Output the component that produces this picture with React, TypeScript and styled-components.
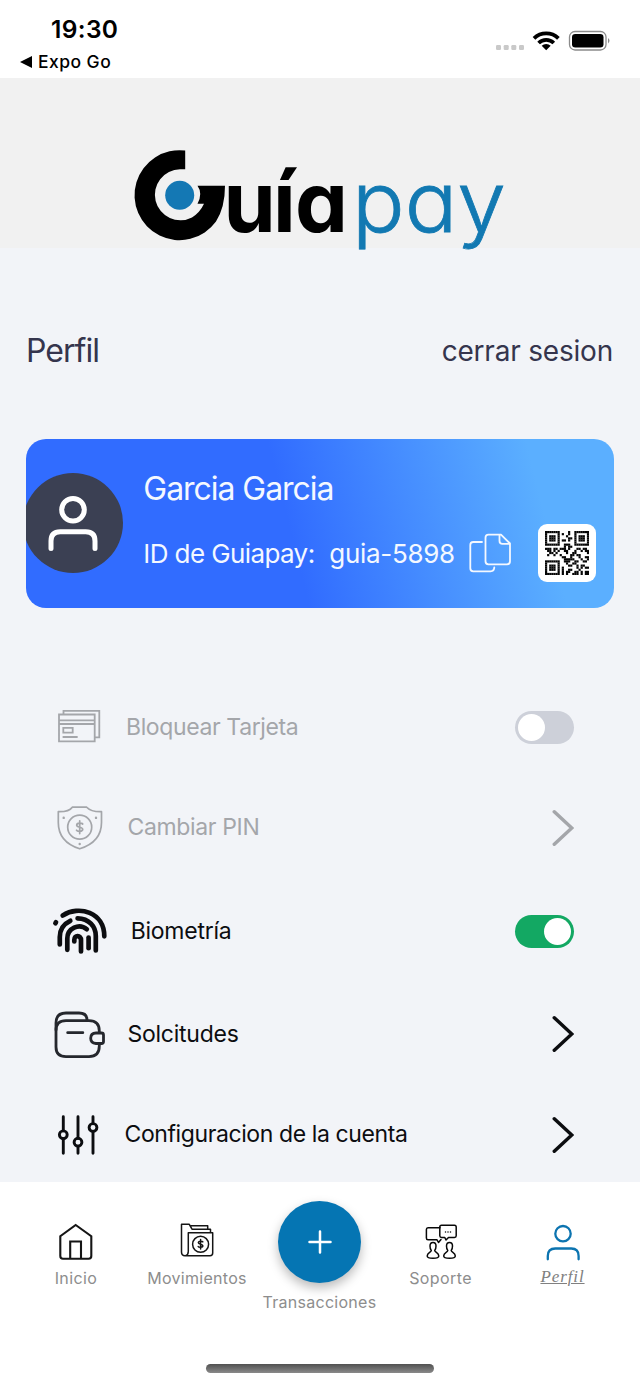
import React from "react";
import styled, { createGlobalStyle } from "styled-components";

const GlobalStyle = createGlobalStyle`
  * { box-sizing: border-box; }
  body { margin: 0; background: #f2f4f8; }
`;

const Screen = styled.main`
  width: 640px;
  height: 1386px;
  display: flex;
  flex-direction: column;
  overflow: hidden;
  background: #f2f4f8;
  font-family: Inter, "Liberation Sans", sans-serif;
  color: #111216;
`;

const Label = styled.span<{ $size: number; $track?: number; $weight?: number; $color?: string }>`
  font-size: ${(p) => p.$size}px;
  font-weight: ${(p) => p.$weight ?? 400};
  letter-spacing: ${(p) => p.$track ?? 0}px;
  color: ${(p) => p.$color ?? "inherit"};
  line-height: 1.2;
  white-space: nowrap;
`;

const StatusBar = styled.header`
  height: 78px;
  flex: none;
  display: flex;
  justify-content: space-between;
  background: #fff;
  color: #000;
`;

const StatusLeft = styled.div`
  display: flex;
  flex-direction: column;
  padding: 15px 0 0 20px;
  gap: 7px;
`;

const Clock = styled(Label)`
  padding-left: 31px;
`;

const BackLink = styled.div`
  display: flex;
  align-items: center;
  gap: 6px;
`;

const StatusIcons = styled.svg`
  display: block;
  margin: 24px 26px 0 0;
`;

const Brand = styled.section`
  height: 169.5px;
  flex: none;
  background: #f1f1f1;
  display: flex;
  align-items: flex-end;
  justify-content: center;
`;

const Logo = styled.svg`
  display: block;
  overflow: visible;
  font-family: Inter, sans-serif;
  font-feature-settings: "cv11";
`;

const TitleRow = styled.div`
  display: flex;
  justify-content: space-between;
  align-items: center;
  height: 48px;
  margin: 80px 27px 0 26px;
  flex: none;
  color: #35354d;
`;

const Card = styled.section`
  flex: none;
  display: flex;
  width: 588px;
  height: 169px;
  margin: 63px 0 0 25.5px;
  border-radius: 20px;
  overflow: hidden;
  color: #f4f8ff;
  background: linear-gradient(76deg, #316cff 45%, #5bafff 86%);
`;

const Avatar = styled.svg`
  flex: none;
  margin: 34px 0 0 -2.7px;
`;

const CardInfo = styled.div`
  width: 415px;
  flex: none;
  padding: 31px 0 0 20.5px;
`;

const IdLine = styled.div`
  display: flex;
  align-items: center;
  height: 44px;
  margin-top: 23.5px;
`;

const IdKey = styled(Label)`
  width: 186px;
`;

const IdValue = styled(Label)`
  width: 140px;
`;

const QrTile = styled.div`
  width: 58px;
  height: 58px;
  margin-top: 85px;
  display: grid;
  place-items: center;
  border-radius: 9px;
  background: #fff;
`;

const Settings = styled.section`
  flex: 1;
  min-height: 0;
  overflow: hidden;
  padding-top: 69.5px;
`;

const Row = styled.div<{ $h: number; $muted?: boolean }>`
  display: flex;
  align-items: center;
  height: ${(p) => p.$h}px;
  padding: 0 66px 0 40px;
  color: ${(p) => (p.$muted ? "#a4a6aa" : "#0c0d10")};
`;

const RowLabel = styled(Label)`
  flex: 1;
  padding-top: 1.5px;
`;

const Toggle = styled.div<{ $on?: boolean }>`
  width: 59px;
  height: 33px;
  padding: 3px;
  border-radius: 17px;
  display: flex;
  justify-content: ${(p) => (p.$on ? "flex-end" : "flex-start")};
  background: ${(p) => (p.$on ? "#13a863" : "#cdd0d9")};
`;

const Knob = styled.div`
  width: 27px;
  height: 27px;
  border-radius: 50%;
  background: #fff;
`;

const TabBar = styled.nav`
  flex: none;
  height: 204px;
  display: flex;
  flex-direction: column;
  align-items: center;
  background: #fff;
`;

const Tabs = styled.div`
  width: 100%;
  height: 182px;
  display: grid;
  grid-template-columns: 121px 121px 124px 118px 126px;
  padding-left: 15.5px;
`;

const Tab = styled.div`
  display: flex;
  flex-direction: column;
  align-items: center;
  padding-top: 34px;
  gap: 3px;
  color: #8d8d8d;
`;

const CenterTab = styled(Tab)`
  padding-top: 18.5px;
  gap: 10px;
`;

const AddButton = styled.div`
  width: 83px;
  height: 82px;
  border-radius: 50%;
  display: grid;
  place-items: center;
  background: #0575b3;
  box-shadow: 0 5px 11px rgba(0, 0, 0, 0.27);
`;

const ActiveLabel = styled.span`
  font: italic 17px "Liberation Serif", serif;
  line-height: 16px;
  letter-spacing: 0.9px;
  text-decoration: underline;
  text-decoration-thickness: 1px;
  color: #808080;
`;

const HomeIndicator = styled.div`
  width: 228px;
  height: 8.5px;
  border-radius: 5px;
  background: linear-gradient(#505050, #8a8a8a);
`;

type IconProps = { x: number; y: number; w: number; h: number; stroke?: string; sw?: number; children: React.ReactNode };

const IconSvg = styled.svg`
  flex: none;
  display: block;
`;

const Icon = ({ x, y, w, h, stroke = "currentColor", sw = 2, children }: IconProps) => (
  <IconSvg width={w} height={h} viewBox={`${x} ${y} ${w} ${h}`} fill="none" stroke={stroke} strokeWidth={sw} strokeLinecap="round" strokeLinejoin="round">
    {children}
  </IconSvg>
);

const Chevron = () => (
  <Icon x={550} y={807} w={24} h={40} sw={3.5}>
    <path d="M554.3 810.8 571.8 827 554.3 843.2" strokeLinejoin="miter" />
  </Icon>
);

const DOLLAR = "M3 -3.2C2.4 -4.4 -3 -4.8 -3 -2C-3 0.4 3 -0.4 3 2C3 4.8 -2.6 4.4 -3.2 3M0 -6.4V6.4";

const QR_ROWS = [
  "111111100001001111111",
  "100000101001001000001",
  "101110100010001011101",
  "101110100001101011101",
  "101110101101001011101",
  "100000100000001000001",
  "111111100111001111111",
  "000000000101100000000",
  "111011011101000110110",
  "011010100110001001011",
  "001101000010011000001",
  "010010010000110110000",
  "000000001100100010011",
  "000000000111110001001",
  "111111100111001100110",
  "100000100010011000000",
  "101110100001100101100",
  "101110101000000101011",
  "101110101001100010000",
  "100000101011001101011",
  "111111101010011101011",
];

const QrCode = () => (
  <svg width="44" height="44" viewBox="0 0 21 21" fill="#050505">
    {QR_ROWS.flatMap((row, y) =>
      [...row].map((c, x) => (c === "1" ? <rect key={`${x}-${y}`} x={x} y={y} width="1.04" height="1.04" /> : null))
    )}
  </svg>
);

export default function App() {
  return (
    <Screen>
      <GlobalStyle />
      <StatusBar>
        <StatusLeft>
          <Clock $size={24.5} $weight={600} $track={0.35}>19:30</Clock>
          <BackLink>
            <svg width="12" height="12" viewBox="0 0 12 12"><path d="M0 6 12 0V12Z" /></svg>
            <Label $size={17.5} $weight={500} $track={0.45}>Expo Go</Label>
          </BackLink>
        </StatusLeft>
        <StatusIcons width="120" height="32" viewBox="494 24 120 32">
          <g fill="#c9c9c9">
            <rect x="496" y="45" width="5" height="5" rx="1.2" />
            <rect x="503.7" y="45" width="5" height="5" rx="1.2" />
            <rect x="511.3" y="45" width="5" height="5" rx="1.2" />
            <rect x="519" y="45" width="5" height="5" rx="1.2" />
          </g>
          <g fill="none" stroke="#000" strokeWidth="3.8">
            <path d="M534 38.3A17.5 17.5 0 0 1 558.4 38.3" />
            <path d="M538.6 43A11 11 0 0 1 553.8 43" />
          </g>
          <path d="M546.2 50.3 541.7 45.7A6.5 6.5 0 0 1 550.7 45.7Z" />
          <rect x="569.5" y="31.5" width="36.5" height="18.5" rx="5.5" fill="none" stroke="#8b8b8b" strokeWidth="1.3" />
          <rect x="572" y="34" width="31.5" height="13.5" rx="3.3" />
          <path d="M608 38Q611 40.7 608 43.5Z" fill="#8b8b8b" />
        </StatusIcons>
      </StatusBar>

      <Brand>
        <Logo width="380" height="98" viewBox="130 149.500 380 98">
          <path d="M185.200 150V168.800H180A25.500 25.500 0 1 0 192 217Q200 212 204 203.300H197.500Q203 193 197.500 185.300H225Q225 207 216 221A45 45 0 1 1 185.200 150Z" />
          <circle cx="179.700" cy="194.700" r="14.500" fill="#1478b4" />
          <text x="223.500 273 295" y="231" fontSize="84" fontWeight="700">uía</text>
          <text x="352" y="231" fontSize="84" fontWeight="300" fill="#1279b2" stroke="#1279b2" strokeWidth="0.8" textLength="154" lengthAdjust="spacingAndGlyphs">pay</text>
        </Logo>
      </Brand>

      <TitleRow>
        <Label $size={32} $track={-0.95}>Perfil</Label>
        <Label $size={28} $track={-0.2}>cerrar sesion</Label>
      </TitleRow>

      <Card>
        <Avatar width="100" height="100" viewBox="23.300 473 100 100">
          <circle cx="73.300" cy="523" r="50" fill="#3b4053" />
          <g fill="none" stroke="#fff" strokeWidth="5" strokeLinecap="round">
            <circle cx="73.300" cy="509.700" r="11.300" />
            <path d="M51.300 548.500V541Q51.300 531.700 60.500 531.700H86Q95.300 531.700 95.300 541V548.500" />
          </g>
        </Avatar>
        <CardInfo>
          <Label $size={32} $track={-1.05}>Garcia Garcia</Label>
          <IdLine>
            <IdKey $size={26} $track={-0.6}>ID de Guiapay:</IdKey>
            <IdValue $size={26} $track={-0.3}>guia-5898</IdValue>
            <Icon x={470} y={532} w={43} h={42} sw={1.8}>
              <path d="M502 534.700H489.500Q486.500 534.700 486.500 537.700V561.300Q486.500 564.300 489.500 564.300H508Q511 564.300 511 561.300V543.500L502 534.700ZM500.500 534.700V541Q500.500 543.900 503.500 543.900H511" />
              <path d="M483 542H474.300Q471.300 542 471.300 545V568.300Q471.300 571.300 474.300 571.300H491.500Q495.300 571.300 495.300 567.300" />
            </Icon>
          </IdLine>
        </CardInfo>
        <QrTile><QrCode /></QrTile>
      </Card>

      <Settings>
        <Row $h={100} $muted>
          <Icon x={40} y={697} w={86} h={60} sw={1.8}>
            <path d="M59 714.500H94.700V741.300H59ZM59 720.300H94.700M59 724H94.700M63.300 727.800H72.700V732.700H63.300ZM63.300 737H77M63.500 714V710.800H99.300V737.300H95" strokeLinejoin="miter" />
          </Icon>
          <RowLabel $size={23} $track={-0.38}>Bloquear Tarjeta</RowLabel>
          <Toggle><Knob /></Toggle>
        </Row>
        <Row $h={101} $muted>
          <Icon x={40} y={797.5} w={87.5} h={60} sw={1.7}>
            <path d="M58.300 811.200Q69 811.500 72.300 806.700H86.700Q91 811.500 101.500 811.200V822Q101.500 841.500 79.700 848.300Q58.300 841.500 58.300 822Z" />
            <circle cx="79.700" cy="826.700" r="12" />
            <path transform="translate(79.700 826.700)" d={DOLLAR} />
            <path d="M63.700 817.300V817.400M96 817.300V817.400M79.700 843.500V843.600" strokeWidth="2.400" />
          </Icon>
          <RowLabel $size={23} $track={-0.35}>Cambiar PIN</RowLabel>
          <Chevron />
        </Row>
        <Row $h={106}>
          <Icon x={40} y={901} w={90.7} h={60} sw={4.7}>
            <path d="M62.700 915.400C79 905 104.300 912 104.300 936.300" />
            <path d="M55.400 923.200 56 922.200" />
            <path d="M70.300 920.800C62.500 924.500 59.800 930.500 59.800 937V944.500" />
            <path d="M77.600 918.300C89 918.500 95.800 926.500 95.800 936V950.500" />
            <path d="M86.800 929.300C79 922.500 67.300 928.500 67.300 938.500V949.800" />
            <path d="M74.300 941.500V940C74.300 934.500 81 935 81 940V951.500" />
            <path d="M88.600 937.500V948.200" />
          </Icon>
          <RowLabel $size={23} $track={-0.25}>Biometría</RowLabel>
          <Toggle $on><Knob /></Toggle>
        </Row>
        <Row $h={100}>
          <Icon x={40} y={1004} w={87.5} h={60} sw={2.8} stroke="#25272d">
            <path d="M99.300 1032.300V1031Q99.300 1020.700 89 1020.700H66Q56 1020.700 56 1030.500V1047Q56 1056.600 66 1056.600H89Q99.300 1056.600 99.300 1046V1044.500" />
            <path d="M56 1030V1023Q56 1013 66 1013H79Q87 1013 87 1020" />
            <path d="M96 1033H101.500Q103.500 1033 103.500 1035V1041.500Q103.500 1043.500 101.500 1043.500H96Q90.700 1043 90.700 1038.300Q90.700 1033 96 1033Z" />
            <path d="M67.700 1032.700H82.800" />
          </Icon>
          <RowLabel $size={23} $track={-0.25}>Solcitudes</RowLabel>
          <Chevron />
        </Row>
        <Row $h={101}>
          <Icon x={40} y={1104.5} w={84.5} h={60} sw={2.9}>
            <path d="M63.300 1116.300V1130.300M63.300 1138.300V1152.800M78 1116.300V1137.700M78 1145.700V1152.800M93 1116.300V1123M93 1131V1152.800" />
            <circle cx="63.300" cy="1134.300" r="3.900" />
            <circle cx="78" cy="1141.700" r="3.900" />
            <circle cx="93" cy="1127" r="3.900" />
          </Icon>
          <RowLabel $size={23} $track={-0.4}>Configuracion de la cuenta</RowLabel>
          <Chevron />
        </Row>
      </Settings>

      <TabBar>
        <Tabs>
          <Tab>
            <Icon x={56} y={1216} w={42} h={50} stroke="#151515" sw={2.1}>
              <path d="M76.700 1225 92.300 1236.200V1256Q92.300 1258.700 89.600 1258.700H64Q61.300 1258.700 61.300 1256V1236.200ZM71.200 1258.700V1241.500H82V1258.700" strokeLinejoin="miter" />
            </Icon>
            <Label $size={16} $track={0.4}>Inicio</Label>
          </Tab>
          <Tab>
            <Icon x={177} y={1216} w={42} h={50} stroke="#151515" sw={1.5}>
              <path d="M189.300 1255.700H186Q182.500 1255.700 182.500 1252V1224.300H190.300L193 1229.200H211.500V1232.500M192 1225.800H208.700V1229M189.300 1232.700H213.700V1253Q213.700 1255.700 211 1255.700H186.500Q189.300 1255 189.300 1251.500Z" />
              <circle cx="201.600" cy="1244.300" r="8" />
              <path transform="translate(201.600 1244.300) scale(.75)" d={DOLLAR} strokeWidth="2" />
            </Icon>
            <Label $size={16} $track={0.3}>Movimientos</Label>
          </Tab>
          <CenterTab>
            <AddButton>
              <Icon x={308} y={1230} w={24} h={24} stroke="#fff" sw={2.5}>
                <path d="M309.500 1242H330.500M320 1231.500V1252.500" />
              </Icon>
            </AddButton>
            <Label $size={16} $track={0.27}>Transacciones</Label>
          </CenterTab>
          <Tab>
            <Icon x={420} y={1216} w={42} h={50} stroke="#080808" sw={1.5}>
              <path d="M440 1227.700H428Q426.400 1227.700 426.400 1229.500V1238Q426.400 1239.800 428 1239.800H437L438.500 1242.500L441 1239.500" />
              <path d="M441.500 1225.200H454.500Q456.200 1225.200 456.200 1227V1235.800Q456.200 1237.500 454.500 1237.500H448.500L446 1240L444.800 1237.500H441.500Q439.800 1237.500 439.800 1235.800V1227Q439.800 1225.200 441.500 1225.200ZM445.500 1232V1232.100M448 1232V1232.100M450.500 1232V1232.100" />
              <path id="person" d="M431.300 1250.500Q430 1249 430 1246Q430 1242.500 433 1242.500Q436 1242.500 436 1246Q436 1249 434.700 1250.500C435 1252.500 438.800 1252.500 438.800 1256Q438.800 1258.300 433 1258.300Q427.200 1258.300 427.200 1256C427.200 1252.500 431 1252.500 431.300 1250.500Z" />
              <use href="#person" x="16.500" />
            </Icon>
            <Label $size={16} $track={0.4}>Soporte</Label>
          </Tab>
          <Tab>
            <Icon x={541.7} y={1216} w={42} h={50} stroke="#0c74b0" sw={2.3}>
              <circle cx="562.700" cy="1233.700" r="7.700" />
              <path d="M547.500 1259.300V1256Q547.500 1248.500 555 1248.500H571Q578.300 1248.500 578.300 1256V1259.300" />
            </Icon>
            <ActiveLabel>Perfil</ActiveLabel>
          </Tab>
        </Tabs>
        <HomeIndicator />
      </TabBar>
    </Screen>
  );
}
